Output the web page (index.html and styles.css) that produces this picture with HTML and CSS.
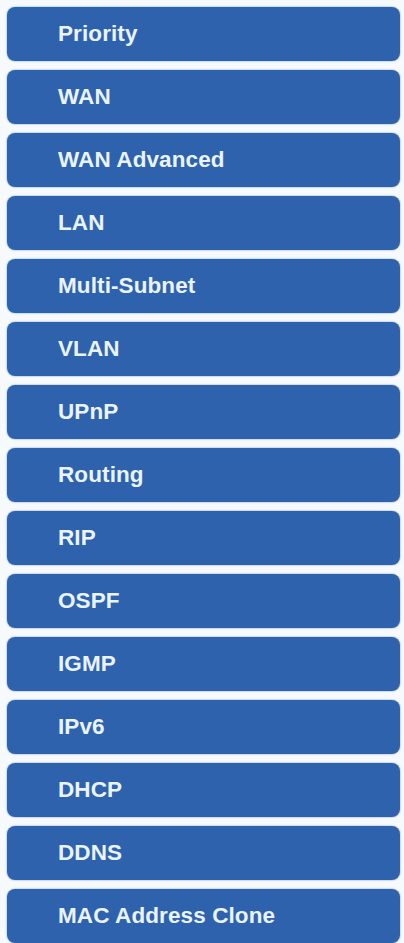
FILE: index.html
```html
<!DOCTYPE html>
<html>
<head>
<meta charset="utf-8">
<link rel="stylesheet" href="styles.css">
</head>
<body>
<nav class="menu">
  <a class="item">Priority</a>
  <a class="item">WAN</a>
  <a class="item">WAN Advanced</a>
  <a class="item">LAN</a>
  <a class="item">Multi-Subnet</a>
  <a class="item">VLAN</a>
  <a class="item">UPnP</a>
  <a class="item">Routing</a>
  <a class="item">RIP</a>
  <a class="item">OSPF</a>
  <a class="item">IGMP</a>
  <a class="item">IPv6</a>
  <a class="item">DHCP</a>
  <a class="item">DDNS</a>
  <a class="item">MAC Address Clone</a>
</nav>
</body>
</html>
```

FILE: styles.css
```css
html, body {
  margin: 0;
  padding: 0;
  background: #f7fafd;
}
.menu {
  display: flex;
  flex-direction: column;
  gap: 9px;
  padding: 7px 4px 0 7px;
}
.item {
  display: flex;
  align-items: center;
  height: 54px;
  box-sizing: border-box;
  padding-left: 51px;
  background: #2e62ad;
  border-radius: 8px;
  box-shadow: 0 0 1px 1px rgba(120, 160, 210, 0.35);
  color: #eaf4ff;
  font-family: "Liberation Sans", Arial, sans-serif;
  font-weight: bold;
  font-size: 22.5px;
  letter-spacing: 0.1px;
  text-decoration: none;
}
```
